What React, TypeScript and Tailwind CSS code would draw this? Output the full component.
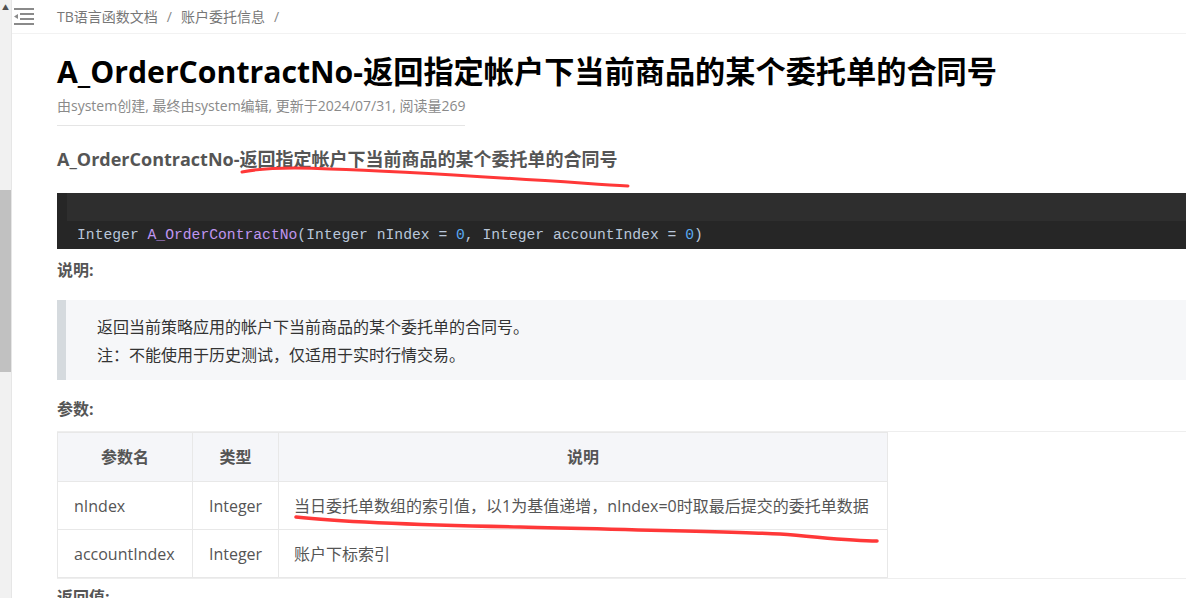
const sans = "font-['Open_Sans','Noto_Sans_CJK_SC',sans-serif]"

function MenuIcon() {
  return (
    <svg width="22" height="20" viewBox="0 0 22 20" className="text-[#8a8a8a]">
      <rect x="0" y="0" width="20" height="2" fill="currentColor" />
      <rect x="6" y="5" width="14" height="2" fill="currentColor" />
      <rect x="6" y="10" width="14" height="2" fill="currentColor" />
      <polygon points="0,8.5 4,6 4,11" fill="currentColor" />
      <rect x="0" y="15" width="20" height="2" fill="currentColor" />
    </svg>
  )
}

const params = [
  { name: 'nIndex', type: 'Integer', desc: '当日委托单数组的索引值，以1为基值递增，nIndex=0时取最后提交的委托单数据' },
  { name: 'accountIndex', type: 'Integer', desc: '账户下标索引' },
]

export default function App() {
  return (
    <div className={`relative flex h-[598px] w-[1186px] overflow-hidden bg-white ${sans}`}>
      {/* sidebar scrollbar strip */}
      <aside className="flex w-[12px] shrink-0 flex-col border-r border-[#e6e6e6] bg-[#f1f1f1]">
        <div className="flex h-[12px] items-center justify-center pt-[2px] text-[7px] leading-none text-[#505050]">▲</div>
        <div className="h-[178px]" />
        <div className="h-[182px] w-[11px] bg-[#c1c1c1]" />
      </aside>

      <main className="min-w-0 flex-1">
        <header className="flex h-[34px] items-center border-b border-[#f2f2f2]">
          <div className="ml-[2px] mt-[2px] flex w-[43px]">
            <MenuIcon />
          </div>
          <nav className="flex items-center text-[14px] text-[#777]">
            <span>TB语言函数文档</span>
            <span className="mx-[9px] text-[#888]">/</span>
            <span>账户委托信息</span>
            <span className="mx-[9px] text-[#888]">/</span>
          </nav>
        </header>

        <div className="pl-[45px]">
          <h1 className="mt-[18px] whitespace-nowrap text-[30.2px] font-bold leading-[40px] text-black">
            A_OrderContractNo-返回指定帐户下当前商品的某个委托单的合同号
          </h1>
          <p className="mt-[4px] w-fit border-b border-[#e5e5e5] pb-[9px] text-[14px] leading-[20px] text-[#8a8a8a]">
            由system创建, 最终由system编辑, 更新于2024/07/31, 阅读量269
          </p>

          <h3 className="mt-[20px] text-[18px] font-bold leading-[26px] text-[#555]">
            A_OrderContractNo-返回指定帐户下当前商品的某个委托单的合同号
          </h3>

          <div className="mt-[21px] bg-[#262626]">
            <div className="ml-[10px] h-[28px] bg-[#2e2e2e]" />
            <pre className="h-[28px] pl-[20px] font-['Liberation_Mono',monospace] text-[14.7px] leading-[29px] text-[#b9c7da]">
              Integer <span className="text-[#bf95f0]">A_OrderContractNo</span>(Integer nIndex = <span className="text-[#5aa9f0]">0</span>, Integer accountIndex = <span className="text-[#5aa9f0]">0</span>)
            </pre>
          </div>

          <p className="mt-[9px] text-[16px] font-bold leading-[24px] text-[#555]">说明:</p>

          <blockquote className="mt-[18px] flex bg-[#f6f7f9]">
            <div className="w-[9px] shrink-0 bg-[#d5dade]" />
            <div className="pb-[11px] pl-[31px] pt-[13px] text-[16px] leading-[28px] text-[#333]">
              <p>返回当前策略应用的帐户下当前商品的某个委托单的合同号。</p>
              <p>注：不能使用于历史测试，仅适用于实时行情交易。</p>
            </div>
          </blockquote>

          <p className="mt-[17px] text-[16px] font-bold leading-[24px] text-[#555]">参数:</p>

          <div className="mt-[10px] border-y border-[#eeeeee]">
            <table className="w-[831px] border-collapse text-[16px] text-[#555]">
              <thead>
                <tr className="h-[49px] bg-[#f5f6f9]">
                  <th className="w-[135px] border border-[#e8e8e8] font-bold">参数名</th>
                  <th className="w-[86px] border border-[#e8e8e8] font-bold">类型</th>
                  <th className="border border-[#e8e8e8] font-bold">说明</th>
                </tr>
              </thead>
              <tbody>
                {params.map((p) => (
                  <tr key={p.name} className="h-[48px]">
                    <td className="border border-[#e8e8e8] pl-[16px]">{p.name}</td>
                    <td className="border border-[#e8e8e8] text-center">{p.type}</td>
                    <td className="whitespace-nowrap border border-[#e8e8e8] pl-[15px]">{p.desc}</td>
                  </tr>
                ))}
              </tbody>
            </table>
          </div>

          <p className="mt-[6px] text-[16px] font-bold leading-[24px] text-[#555]">返回值:</p>
        </div>
      </main>

      {/* red hand-drawn annotations */}
      <svg className="pointer-events-none absolute left-0 top-0" width="1186" height="598">
        <path
          d="M242 172 C 262 168, 290 167, 330 169 C 420 172, 520 179, 628 186"
          stroke="#ff3838"
          strokeWidth="3"
          fill="none"
          strokeLinecap="round"
        />
        <path
          d="M296 517 C 340 522, 420 525, 520 527 C 640 530, 740 532, 780 534 C 820 537, 850 541, 877 541"
          stroke="#ff3838"
          strokeWidth="3.5"
          fill="none"
          strokeLinecap="round"
        />
      </svg>
    </div>
  )
}
